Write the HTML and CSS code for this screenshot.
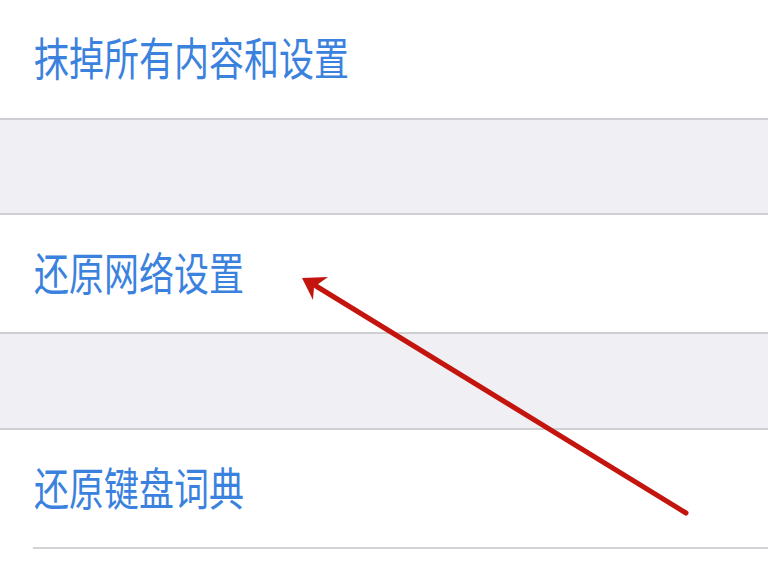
FILE: index.html
```html
<!DOCTYPE html>
<html lang="zh">
<head>
<meta charset="utf-8">
<link rel="stylesheet" href="styles.css">
</head>
<body>
<div class="page">
  <div class="row row-first"><span class="label">抹掉所有内容和设置</span></div>
  <div class="spacer spacer-a"></div>
  <div class="row row-mid"><span class="label">还原网络设置</span></div>
  <div class="spacer spacer-b"></div>
  <div class="row row-last"><span class="label">还原键盘词典</span></div>
  <div class="inset-line"></div>
  <svg class="arrow" width="768" height="576" viewBox="0 0 768 576">
    <line x1="686" y1="513" x2="316" y2="286" stroke="#c4140e" stroke-width="5" stroke-linecap="round"/>
    <polygon points="302,278 328,277 314,287 313,300" fill="#c4140e"/>
  </svg>
</div>
</body>
</html>
```
FILE: styles.css
```css
html, body {
  margin: 0;
  padding: 0;
  background: #ffffff;
}
.page {
  position: relative;
  width: 768px;
  height: 576px;
  overflow: hidden;
  display: flex;
  flex-direction: column;
  font-family: "Noto Sans CJK SC", "Noto Sans", sans-serif;
}
.row {
  display: flex;
  align-items: center;
  padding-left: 34px;
  box-sizing: border-box;
  padding-bottom: 6px;
  background: #ffffff;
}
.row-first {
  height: 120px;
  padding-bottom: 8px;
  border-bottom: 2px solid #cfced3;
}
.row-mid {
  height: 119px;
  border-bottom: 2px solid #cfced3;
}
.row-last {
  height: 117px;
}
.spacer {
  background: #efeff4;
  border-bottom: 2px solid #cfced3;
}
.spacer-a { height: 93px; }
.spacer-b { height: 94px; }
.inset-line {
  margin-left: 33px;
  height: 2px;
  background: #d3d2d6;
}
.label {
  display: inline-block;
  font-size: 35px;
  font-weight: 400;
  line-height: 1;
  color: #3b82de;
  transform: scaleY(1.3);
  transform-origin: center;
}
.arrow {
  position: absolute;
  left: 0;
  top: 0;
}
```
